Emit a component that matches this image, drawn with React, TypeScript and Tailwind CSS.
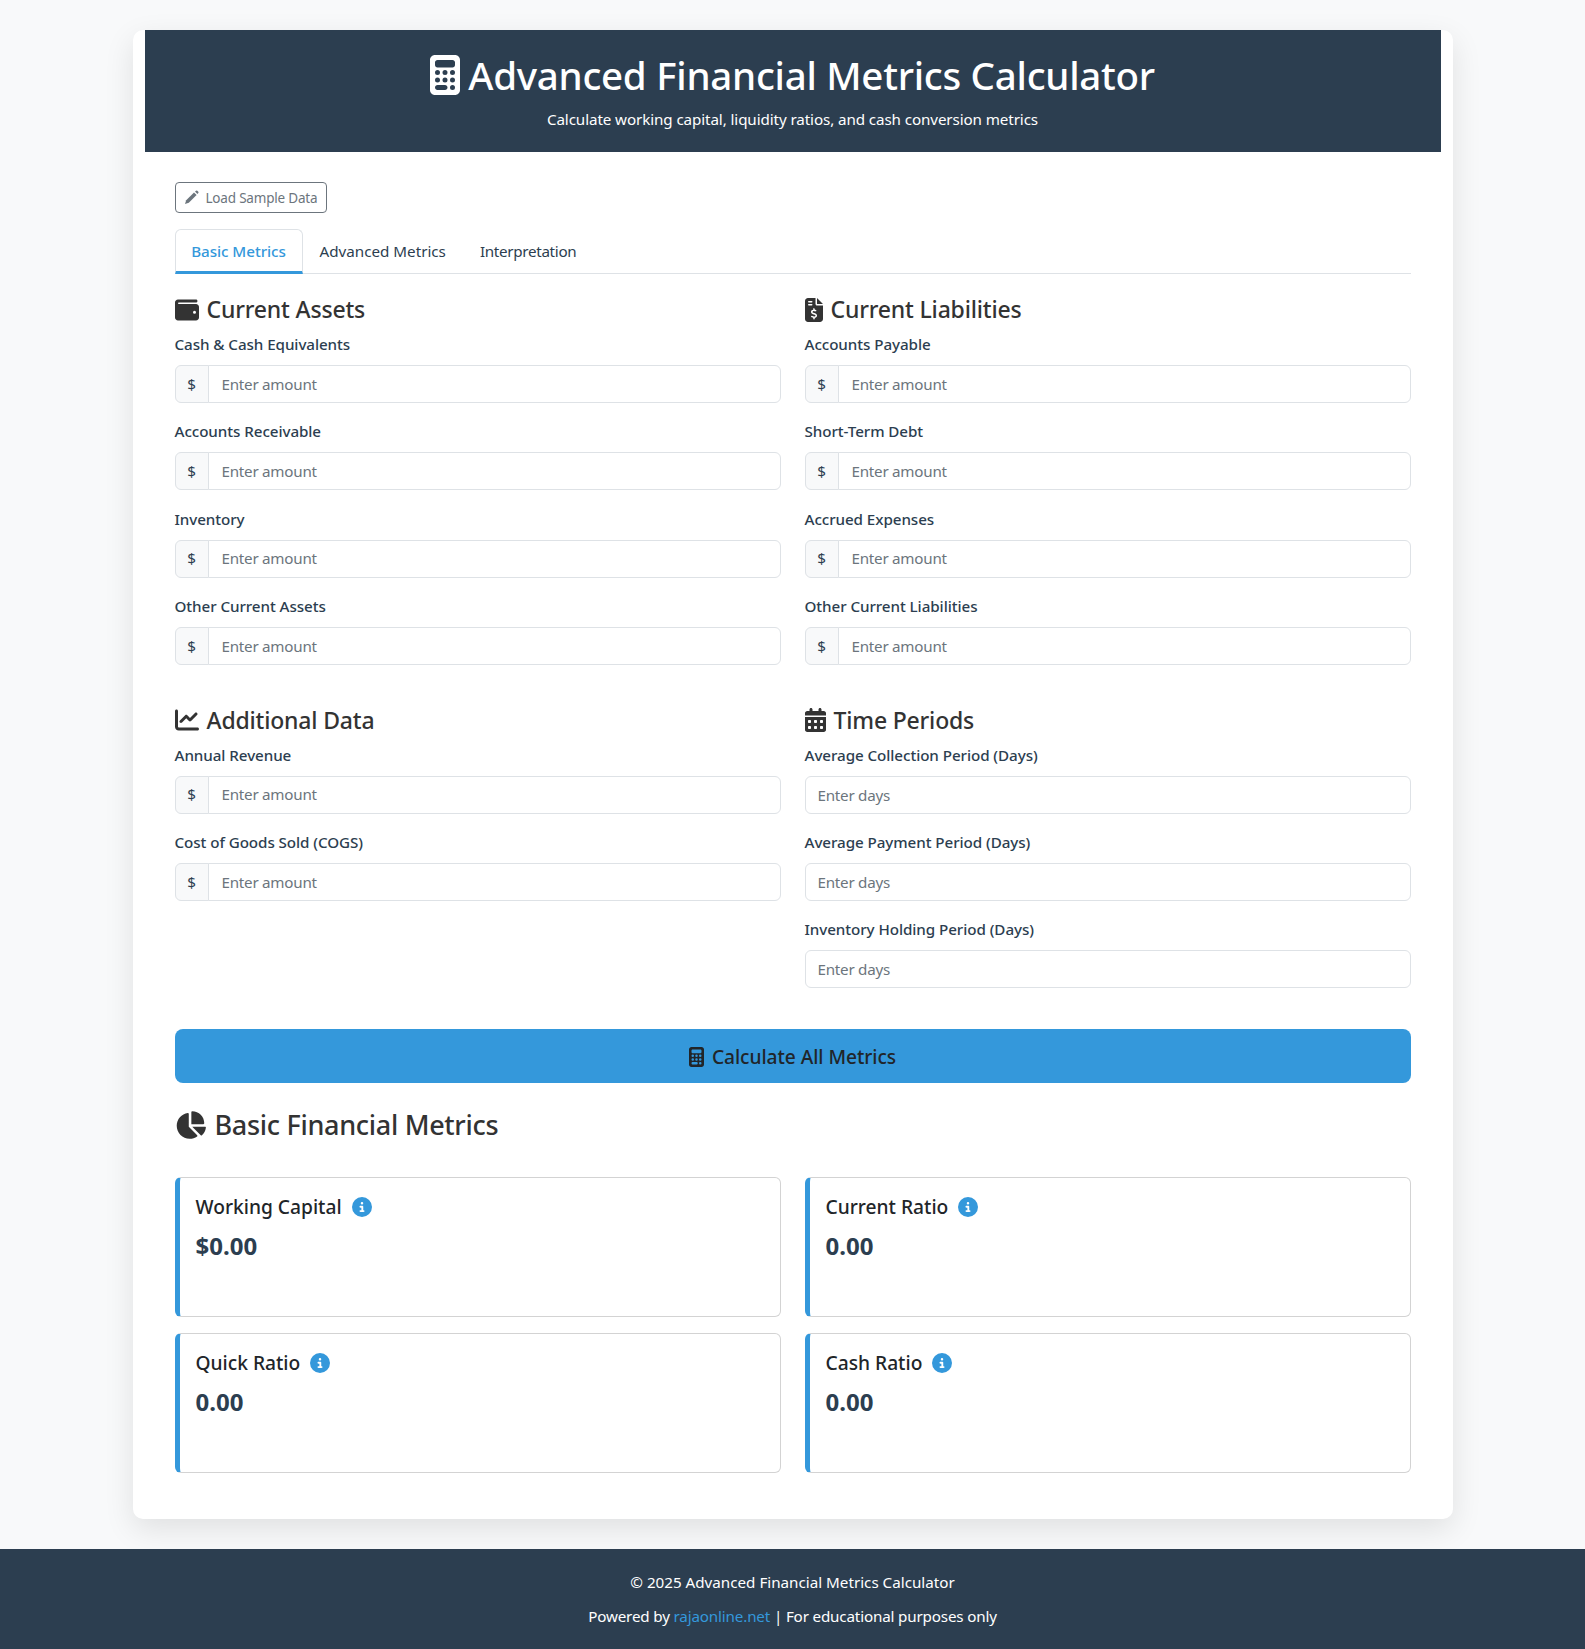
import React from "react";
import { FaCalculator, FaWallet, FaFileInvoiceDollar, FaChartLine, FaCalendarDays, FaChartPie, FaCircleInfo } from "react-icons/fa6";

function PencilIcon() {
  return (
    <svg viewBox="0 0 15 15" className="w-[15px] h-[15px]" fill="currentColor">
      <path d="M1 14 L2.2 10.2 L10 2.4 L12.6 5 L4.8 12.8 Z" />
      <path d="M11 1.6 L12 0.7 Q12.7 0.2 13.3 0.7 L14.3 1.7 Q14.8 2.3 14.3 3 L13.4 4 Z" />
    </svg>
  );
}

function Field({ label, days }: { label: string; days?: boolean }) {
  return (
    <div className="mb-[16.4px]">
      <label className="block mb-[9px] text-[15.2px] leading-6 font-medium text-[#2c3e50] tracking-[-0.07px]">{label}</label>
      {days ? (
        <input
          placeholder="Enter days"
          className="block w-full h-[38px] px-3 border border-[#dee2e6] rounded-md bg-white text-[15.2px] tracking-[-0.25px] placeholder:text-[#6c757d]"
        />
      ) : (
        <div className="flex h-[38px]">
          <span className="flex items-center justify-center w-[34px] shrink-0 bg-[#f8f9fa] border border-[#dee2e6] rounded-l-md text-[15.2px] text-[#2c3e50]">$</span>
          <input
            placeholder="Enter amount"
            className="flex-1 min-w-0 -ml-px pl-[13px] pr-3 border border-[#dee2e6] rounded-r-md bg-white text-[15.2px] tracking-[-0.25px] placeholder:text-[#6c757d]"
          />
        </div>
      )}
    </div>
  );
}

function SectionTitle({ icon, children }: { icon: React.ReactNode; children: React.ReactNode }) {
  return (
    <h4 className="flex items-center gap-2 mb-2 h-[29px] text-[23px] leading-[29px] font-medium text-[#333333] tracking-[-0.18px]">
      {icon}
      <span>{children}</span>
    </h4>
  );
}

function Metric({ title, value }: { title: string; value: string }) {
  return (
    <div className="h-[140px] bg-white border border-[#d3d3d3] border-l-[5px] border-l-[#3498db] rounded-md pl-4 pt-[13px] pr-4">
      <div className="flex items-center gap-[10px] h-8 text-[19.2px] font-medium text-[#212529]">
        <span>{title}</span>
        <FaCircleInfo className="text-[#3498db] w-5 h-5" />
      </div>
      <div className="mt-[7px] text-[24px] leading-8 font-bold text-[#2c3e50]">{value}</div>
    </div>
  );
}

export default function App() {
  return (
    <div className="min-h-[1649px] bg-[#f8f9fa] font-['Noto_Sans',sans-serif] text-[#212529] flex flex-col">
      <div className="w-[1320px] mx-auto mt-[30px] mb-[30px] px-3 pb-[46px] bg-white rounded-[10px] shadow-[0_10px_30px_rgba(0,0,0,0.1)]">
        <header className="h-[122px] bg-[#2c3e50] text-white flex flex-col items-center pt-[21px]">
          <h1 className="flex items-center gap-[8px] h-12 text-[38.5px] leading-[48px] font-medium tracking-[-0.27px]">
            <FaCalculator className="w-[30px] h-[40px]" />
            <span>Advanced Financial Metrics Calculator</span>
          </h1>
          <p className="mt-2 text-[15.2px] leading-6 tracking-[-0.1px]">Calculate working capital, liquidity ratios, and cash conversion metrics</p>
        </header>
        <main className="px-[30px] pt-[30px]">
          <button className="flex items-center gap-[7px] h-[31px] w-[152px] px-2 border border-[#6c757d] rounded text-[13.5px] text-[#6c757d] tracking-[-0.2px]">
            <PencilIcon />
            <span className="pt-[1px]">Load Sample Data</span>
          </button>
          <nav className="flex mt-4 h-[45px] border-b border-[#dee2e6] text-[15.2px]">
            <div className="h-[45px] w-[128px] flex items-center justify-center pt-[2px] border border-[#dee2e6] border-b-[3px] border-b-[#3498db] rounded-t-md text-[#3498db] font-medium bg-white tracking-[-0.05px]">Basic Metrics</div>
            <div className="h-[44px] px-[17px] flex items-center text-[#2c3e50]">Advanced Metrics</div>
            <div className="h-[44px] px-[17px] flex items-center text-[#2c3e50] tracking-[-0.3px]">Interpretation</div>
          </nav>
          <div className="grid grid-cols-2 gap-x-6 mt-[21px]">
            <section>
              <SectionTitle icon={<FaWallet className="w-6 h-6" />}>Current Assets</SectionTitle>
              <Field label="Cash & Cash Equivalents" />
              <Field label="Accounts Receivable" />
              <Field label="Inventory" />
              <Field label="Other Current Assets" />
            </section>
            <section>
              <SectionTitle icon={<FaFileInvoiceDollar className="w-[18px] h-6" />}>Current Liabilities</SectionTitle>
              <Field label="Accounts Payable" />
              <Field label="Short-Term Debt" />
              <Field label="Accrued Expenses" />
              <Field label="Other Current Liabilities" />
            </section>
            <section className="mt-[24px]">
              <SectionTitle icon={<FaChartLine className="w-6 h-6" />}>Additional Data</SectionTitle>
              <Field label="Annual Revenue" />
              <Field label="Cost of Goods Sold (COGS)" />
            </section>
            <section className="mt-[24px]">
              <SectionTitle icon={<FaCalendarDays className="w-[21px] h-6" />}>Time Periods</SectionTitle>
              <Field days label="Average Collection Period (Days)" />
              <Field days label="Average Payment Period (Days)" />
              <Field days label="Inventory Holding Period (Days)" />
            </section>
          </div>
          <button className="flex items-center justify-center gap-2 w-full h-[54px] mt-[24.3px] pt-[2px] bg-[#3498db] rounded-lg text-[19.2px] font-medium text-[#212529] tracking-[-0.05px]">
            <FaCalculator className="w-[15px] h-5" />
            <span>Calculate All Metrics</span>
          </button>
          <h3 className="flex items-center gap-[9px] mt-[25px] mb-[35px] h-[34px] text-[27px] leading-[34px] font-medium text-[#333333] tracking-[-0.3px]">
            <FaChartPie className="w-[31px] h-7" />
            <span>Basic Financial Metrics</span>
          </h3>
          <div className="grid grid-cols-2 gap-x-6 gap-y-4">
            <Metric title="Working Capital" value="$0.00" />
            <Metric title="Current Ratio" value="0.00" />
            <Metric title="Quick Ratio" value="0.00" />
            <Metric title="Cash Ratio" value="0.00" />
          </div>
        </main>
      </div>
      <footer className="h-[100px] bg-[#2c3e50] text-white text-center text-[15.2px] pt-[21px]">
        <p className="leading-6">© 2025 Advanced Financial Metrics Calculator</p>
        <p className="leading-6 mt-[10px] tracking-[-0.16px]">
          Powered by <a className="text-[#3498db]">rajaonline.net</a> | For educational purposes only
        </p>
      </footer>
    </div>
  );
}
